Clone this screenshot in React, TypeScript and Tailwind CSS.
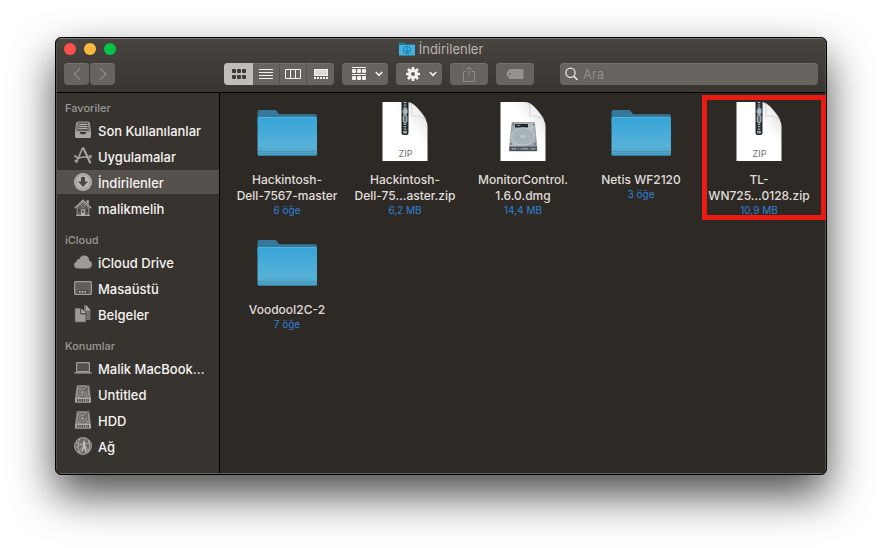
import { useId } from "react";
import type { ReactNode } from "react";

/* ---------- Sidebar icons (18 × 18) ---------- */

function Icon18({ children }: { children: ReactNode }) {
  return (
    <svg viewBox="0 0 18 18" className="h-[18px] w-[18px] shrink-0" aria-hidden="true">
      {children}
    </svg>
  );
}

const TrayIcon = () => (
  <Icon18>
    <path d="M3.600 1h10.800l1 9.500H2.600z" fill="#5f5c58" stroke="#a19e9a" strokeWidth="1" />
    <path d="M4.800 3.500h8.400M4.600 5.500h8.800M4.500 7.500h9" stroke="#b0ada9" strokeWidth="1" />
    <path d="M1 11h4.600c.4 1.700 1.600 2.300 3.400 2.300s3-.6 3.400-2.300H17v4.600c0 .9-.5 1.400-1.400 1.400H2.400C1.500 17 1 16.500 1 15.600z" fill="#aaa7a3" />
    <path d="M2.600 1.500L1.400 11M15.400 1.500L16.600 11" stroke="#a19e9a" strokeWidth="1" />
  </Icon18>
);

const AppsIcon = () => (
  <Icon18>
    <g fill="none" stroke="#a5a29e">
      <path d="M8.200 1.800L2.300 16" strokeWidth="1.600" />
      <path d="M9.600 1.800L15.600 14.500l.7 2" strokeWidth="2.200" />
      <path d="M7.500 2.200L9 .8l1.600 1.400" strokeWidth="1.400" />
      <path d="M.3 8.500l4 3M17.700 8.500L14.500 9.500" strokeWidth="1.600" />
      <path d="M3 12.200c3.500-2.400 8.500-2.400 12-1.200M.5 14.500l2-1.600M15 9.500l2.700 1.400" strokeWidth="1.500" />
    </g>
  </Icon18>
);

const DownloadsIcon = () => (
  <Icon18>
    <circle cx="9" cy="9" r="9" fill="#bab7b3" />
    <circle cx="9" cy="9" r="7.300" fill="none" stroke="#8d8a86" strokeWidth=".7" />
    <path d="M7 4h4v4.500h3L9 14 4 8.500h3z" fill="#4e4b47" />
  </Icon18>
);

const HomeIcon = () => (
  <Icon18>
    <path d="M.7 9.200L9 1.200l8.300 8" fill="none" stroke="#a9a6a2" strokeWidth="1.400" />
    <path d="M12.500 1.200h2.300v4.200l-2.300-2z" fill="#a9a6a2" />
    <path d="M3.200 8.500L9 3l5.800 5.500V16H3.200z" fill="#5d5a56" stroke="#a9a6a2" strokeWidth=".8" />
    <path d="M2 16.500h14" stroke="#a9a6a2" strokeWidth="1" />
    <circle cx="9" cy="6.800" r="1.500" fill="#45423e" stroke="#b5b2ae" strokeWidth=".6" />
    <rect x="7.200" y="10.200" width="3.600" height="6.300" fill="#b5b2ae" />
    <rect x="8" y="11.200" width="1.600" height="2.500" fill="#45423e" />
    <path d="M4.800 10v3M13.200 10v3" stroke="#3a3733" strokeWidth="1.200" />
  </Icon18>
);

const CloudIcon = () => (
  <Icon18>
    <path
      d="M4 15.500C1.700 15.500 0 13.900 0 11.800c0-1.800 1.200-3 2.700-3.400C2.800 6.700 4 5.900 5.400 6 6.200 3.700 8 2.500 10.200 2.500c3 0 5 2.200 5 5.200C16.900 8.100 18 9.600 18 11.500c0 2.300-1.800 4-4 4z"
      fill="#9f9c98"
    />
  </Icon18>
);

const DesktopIcon = () => (
  <Icon18>
    <rect x=".6" y="2.600" width="16.800" height="12.800" rx="1" fill="#625f5b" stroke="#9f9c98" strokeWidth="1.200" />
    <rect x="3.500" y="11" width="11" height="3.500" fill="#4a4743" />
    <path d="M5 12.800h1.600M7.700 12.800h1.600M10.400 12.800H12" stroke="#d0cdc9" strokeWidth="1.600" />
  </Icon18>
);

const DocsIcon = () => (
  <Icon18>
    <path d="M6.500 0H12l4.500 5v10H10V0z" fill="#76736f" />
    <path d="M12 0l4.600 5.300H12z" fill="#aeaba7" />
    <path d="M.8 3H7l5 5.600V17.200H.8z" fill="#9f9c98" stroke="#38342f" strokeWidth=".6" />
    <path d="M6.800 2.600v6.200h5.500" fill="none" stroke="#38342f" strokeWidth="1" />
    <path d="M7.500 3.600L11.700 8H7.500z" fill="#aeaba7" />
  </Icon18>
);

const LaptopIcon = () => (
  <Icon18>
    <rect x="2.600" y="3.600" width="12.800" height="9" rx=".8" fill="#55524e" stroke="#a19e9a" strokeWidth="1.200" />
    <path d="M0 13.200h18c-.2 1-.7 1.300-1.500 1.300h-15C.7 14.500.2 14.200 0 13.200z" fill="#aba8a4" />
  </Icon18>
);

const DiskIcon = () => (
  <Icon18>
    <path d="M2.800.2h12.400l1.600 12.300v5H1.200v-5z" fill="#92908c" />
    <path d="M1.200 13h15.600v4.600H1.200z" fill="#adaaa6" />
    <circle cx="9" cy="7" r="4.700" fill="#8b8884" stroke="#5e5b57" strokeWidth=".9" />
    <circle cx="8.700" cy="7.300" r="1.900" fill="#aaa7a3" stroke="#55524e" strokeWidth=".9" />
    <path d="M13.500 2.800l-3.200 4" stroke="#55524e" strokeWidth="1.200" />
    <path d="M3.600 1.700h2M12.500 1.700h2M3 11h1.500M13.500 11H15" stroke="#55524e" strokeWidth=".8" />
    <path d="M3.500 14v2.800M5.200 14v2.800M6.900 14v2.800M8.600 14v2.800M10.300 14v2.800M12.600 14v2.800M14.300 14v2.800" stroke="#3a3733" strokeWidth=".9" />
  </Icon18>
);

const NetworkIcon = () => (
  <Icon18>
    <circle cx="9" cy="9" r="8.400" fill="#6d6a66" stroke="#aba8a4" strokeWidth="1" />
    <g fill="none" stroke="#b3b0ac" strokeWidth=".9">
      <path d="M2.200 5.200c4 2.600 9.600 2.600 13.600 0M1.500 11c3-2.500 5.500-3.600 9.500-3.800M11 1.500c-1.500 3-1.500 4.500-1 7M6.200 1.500C3 6 3.500 12.500 6.800 16.500M10.300 8.500c2.500 1.500 4 4 4.500 6M8.500 9c-1 2.500-2.500 4.500-4.500 6M14 2.500c2 4 2 9-.5 12.500" />
    </g>
    <circle cx="10.200" cy="5.600" r="1.200" fill="#d0cdc9" />
    <path d="M9.200 7h2l.6 4 1.400 4.500-1.500.2-1.500-4.400-1.800 3.500-1.300-.5L9 10.500z" fill="#c5c2be" />
  </Icon18>
);

/* ---------- File icons ---------- */

function FolderIcon() {
  const id = useId();
  return (
    <svg viewBox="0 0 64 64" className="h-16 w-16" aria-hidden="true">
      <defs>
        <linearGradient id={id} x1="0" y1="0" x2="0" y2="1">
          <stop offset="0" stopColor="#36a5d8" />
          <stop offset=".75" stopColor="#56b1d7" />
          <stop offset="1" stopColor="#4b9fc3" />
        </linearGradient>
      </defs>
      <path d="M2.500 12a2 2 0 0 1 2-2H19c1.600 0 2.600.6 3.500 2l1 1.600c.3.500.8.700 1.500.7h35a2 2 0 0 1 2 2V24h-59.500z" fill="#35789a" />
      <path d="M2.500 18.500a1.500 1.500 0 0 1 1.500-1.500h56.500a1.500 1.500 0 0 1 1.500 1.500V54a2 2 0 0 1-2 2H4.500a2 2 0 0 1-2-2z" fill={`url(#${id})`} />
      <path d="M3.500 17.500H61" stroke="#50b3df" strokeWidth="1" />
      <path d="M3 51.500h58.500M3 53.500h58.500" stroke="#4393b5" strokeWidth=".7" />
      <path d="M3.500 55.500H61" stroke="#337b9b" strokeWidth="1" />
    </svg>
  );
}

function PageShape({ children }: { children: ReactNode }) {
  const id = useId();
  return (
    <svg viewBox="0 0 64 64" className="h-16 w-16" aria-hidden="true">
      <defs>
        <linearGradient id={id} x1="0" y1="1" x2="1" y2="0">
          <stop offset=".6" stopColor="#ffffff" />
          <stop offset=".8" stopColor="#ececec" />
          <stop offset="1" stopColor="#a8a8a8" />
        </linearGradient>
        <linearGradient id={`${id}-curl`} x1="0" y1="1" x2="1" y2="0">
          <stop offset="0" stopColor="#ffffff" />
          <stop offset="1" stopColor="#dedede" />
        </linearGradient>
      </defs>
      <path d="M9.500 2H34c4 0 8 3 12 8s8.500 10.500 8.500 16v35h-45z" fill={`url(#${id})`} />
      <path
        d="M38 3c1.500 3 1.500 8 .6 13 4-.8 9-.2 14.200 3.500C50 14 43 5.500 38 3z"
        fill={`url(#${id}-curl)`}
        stroke="#b5b5b5"
        strokeWidth=".5"
      />
      {children}
    </svg>
  );
}

function ZipIcon() {
  return (
    <PageShape>
      <path d="M28.500 2h7v31a2 2 0 0 1-2 2h-3a2 2 0 0 1-2-2z" fill="#23272b" />
      <path d="M32 2v31" stroke="#a9b4ba" strokeWidth="2.600" strokeDasharray="1.300 1.100" />
      <path d="M30.500 8h3.500l1 4-1.700 3h-2.400l-1.500-3z" fill="#a9bac2" stroke="#49545b" strokeWidth=".6" />
      <rect x="30.300" y="15" width="3.600" height="7.500" rx="1.600" fill="#65727a" stroke="#c7d0d5" strokeWidth=".9" />
      <rect x="30" y="31" width="4" height="2.500" rx=".8" fill="#9aa2a7" />
      <text x="32.500" y="57" textAnchor="middle" fontSize="9" fontFamily="Inter, sans-serif" fill="#6b6b6b">
        ZIP
      </text>
    </PageShape>
  );
}

function DmgIcon() {
  const id = useId();
  return (
    <PageShape>
      <defs>
        <linearGradient id={id} x1="0" y1="0" x2="1" y2="1">
          <stop offset="0" stopColor="#93a1a8" />
          <stop offset=".5" stopColor="#b6c0c5" />
          <stop offset="1" stopColor="#8a979e" />
        </linearGradient>
      </defs>
      <path d="M21 22.500h22.500l2.300 24V51H18.500v-4.500z" fill={`url(#${id})`} stroke="#7c888e" strokeWidth=".6" />
      <rect x="24" y="24" width="13" height="3.500" fill="#20262a" />
      <path d="M25.500 25.300h4" stroke="#a8b3b8" strokeWidth=".8" />
      <ellipse cx="32" cy="36.500" rx="11.500" ry="8.800" fill="#a9b4ba" stroke="#c6ced2" strokeWidth=".7" />
      <ellipse cx="32" cy="36.500" rx="3.600" ry="2.800" fill="#bac3c8" stroke="#98a4aa" strokeWidth=".7" />
      <path d="M18.500 46.500h27.300V51H18.500z" fill="#454d52" />
      <path d="M20.500 48.800h5M27 48.800h1M29.500 48.800h8M39.500 48.800h5" stroke="#87939a" strokeWidth="2" />
      <g fill="#4d575c">
        <circle cx="22" cy="24.500" r=".8" />
        <circle cx="42.500" cy="24.500" r=".8" />
        <circle cx="20.500" cy="44" r=".8" />
        <circle cx="44" cy="44" r=".8" />
      </g>
    </PageShape>
  );
}

/* ---------- Toolbar ---------- */

const Chevron = () => (
  <svg width="8" height="6" viewBox="0 0 8 6" fill="none" stroke="#f4f2f0" strokeWidth="1.500" aria-hidden="true">
    <path d="M.8 1l3.200 3.300L7.200 1" />
  </svg>
);

const toolButton =
  "flex h-[22px] items-center justify-center rounded bg-[#67635f] shadow-[inset_0_1px_0_#75716d]";

const viewButtons = [
  {
    label: "Simge",
    style: "w-[29px] bg-[#c0bcb8]",
    icon: (
      <g fill="#3d3935">
        {[2, 8].map((y) =>
          [1, 6, 11].map((x) => <rect key={`${x}-${y}`} x={x} y={y} width="4" height="4" rx="1" />),
        )}
      </g>
    ),
  },
  {
    label: "Liste",
    style: "w-[26px]",
    icon: <path d="M1 2.500h14M1 5.500h14M1 8.500h14M1 11.500h14" stroke="#f4f2f0" />,
  },
  {
    label: "Sütun",
    style: "w-[27px] border-l border-[#55514d]",
    icon: <path d="M.5 2.500h15v9H.5zM5.500 2.500v9M10.500 2.500v9" fill="none" stroke="#f4f2f0" />,
  },
  {
    label: "Galeri",
    style: "w-[28px] border-l border-[#55514d]",
    icon: (
      <>
        <rect x="1.500" y="2.500" width="13" height="6" fill="#dedad6" stroke="#f4f2f0" />
        <path d="M1 11h2M4 11h2M7 11h2M10 11h2M13 11h2" stroke="#f4f2f0" strokeWidth="2" />
      </>
    ),
  },
];

function Toolbar() {
  return (
    <header className="h-[54px] shrink-0 border-b border-black bg-linear-to-b from-[#48443f] to-[#393531] px-[7px]">
      <div className="grid h-5 grid-cols-[1fr_auto_1fr] items-center">
        <div className="flex gap-2">
          <button aria-label="Kapat" className="h-3 w-3 rounded-full bg-[#ff4f4b]" />
          <button aria-label="Küçült" className="h-3 w-3 rounded-full bg-[#ffb83f]" />
          <button aria-label="Büyüt" className="h-3 w-3 rounded-full bg-[#00c447]" />
        </div>
        <h1 className="flex items-center gap-1 text-[13px] leading-5 text-[#b9b6b2]">
          <svg width="16" height="14" viewBox="0 0 16 14" aria-hidden="true">
            <path d="M0 .5h5.500L7 2h9v3H0z" fill="#23769a" />
            <path d="M0 3h16v10.500H0z" fill="#45b2de" />
            <circle cx="8" cy="8" r="3.700" fill="none" stroke="#1b81b0" />
            <path d="M8 5.500v4.500M6 8.300L8 10.300l2-2" fill="none" stroke="#1b81b0" strokeWidth="1.200" />
          </svg>
          İndirilenler
        </h1>
      </div>

      <div className="mt-1 flex">
        <div className="flex gap-px">
          <button aria-label="Geri" className={`${toolButton} w-[25px]`}>
            <svg width="8" height="12" viewBox="0 0 8 12" fill="none" stroke="#8f8b87" strokeWidth="1.300">
              <path d="M7 .5L1.200 6 7 11.500" />
            </svg>
          </button>
          <button aria-label="İleri" className={`${toolButton} w-[25px]`}>
            <svg width="8" height="12" viewBox="0 0 8 12" fill="none" stroke="#8f8b87" strokeWidth="1.300">
              <path d="M1 .5L6.800 6 1 11.500" />
            </svg>
          </button>
        </div>

        <div className="ml-[109px] flex gap-2">
          <div className={`${toolButton} overflow-hidden`}>
            {viewButtons.map((b) => (
              <button key={b.label} aria-label={b.label} className={`flex h-full items-center justify-center ${b.style}`}>
                <svg width="16" height="14" viewBox="0 0 16 14">
                  {b.icon}
                </svg>
              </button>
            ))}
          </div>
          <button aria-label="Düzenle" className={`${toolButton} w-[46px] gap-2 pl-[3px]`}>
            <svg width="16" height="14" viewBox="0 0 16 14">
              <path d="M1 .5h14M1 7.500h14" stroke="#f4f2f0" />
              <g fill="#f4f2f0">
                {[2, 9].map((y) =>
                  [1, 6, 11].map((x) => <rect key={`${x}-${y}`} x={x} y={y} width="4" height="4" rx="1" />),
                )}
              </g>
            </svg>
            <Chevron />
          </button>
          <button aria-label="Eylem" className={`${toolButton} w-[46px] gap-2 pl-[3px]`}>
            <svg width="16" height="16" viewBox="0 0 16 16">
              <g stroke="#f4f2f0" strokeWidth="2.600">
                <path d="M8 1v14M1 8h14M3 3l10 10M13 3L3 13" />
              </g>
              <circle cx="8" cy="8" r="5" fill="#f4f2f0" />
              <circle cx="8" cy="8" r="2" fill="#67635f" />
            </svg>
            <Chevron />
          </button>
          <button aria-label="Paylaş" className={`${toolButton} w-[38px]`}>
            <svg width="12" height="16" viewBox="0 0 12 16" fill="none" stroke="#8f8b87">
              <path d="M3.500 5.500h-3v10h11v-10h-3M6 11V1M3 4l3-3 3 3" />
            </svg>
          </button>
          <button aria-label="Etiketler" className={`${toolButton} w-[38px]`}>
            <svg width="18" height="10" viewBox="0 0 18 10">
              <path d="M4.500 0H16a1.500 1.500 0 0 1 1.500 1.500v7A1.500 1.500 0 0 1 16 10H4.500C3 10 .5 6.500.5 5S3 0 4.500 0z" fill="#96928e" />
              <circle cx="4" cy="5" r="1" fill="#67635f" />
            </svg>
          </button>
        </div>

        <label className={`${toolButton} ml-[26px] min-w-0 flex-1 gap-1 pr-2 pl-[5px]`}>
          <svg width="14" height="14" viewBox="0 0 14 14" fill="none" stroke="#e9e7e5" strokeWidth="1.300" aria-hidden="true">
            <circle cx="5.500" cy="5.700" r="4.600" />
            <path d="M8.800 9.200l3.700 3.700" strokeWidth="1.600" />
          </svg>
          <input
            type="search"
            aria-label="Ara"
            placeholder="Ara"
            className="h-full min-w-0 flex-1 bg-transparent text-[13px] text-white outline-none placeholder:text-[#918d89]"
          />
        </label>
      </div>
    </header>
  );
}

/* ---------- Sidebar ---------- */

const sections = [
  {
    title: "Favoriler",
    items: [
      { label: "Son Kullanılanlar", icon: <TrayIcon /> },
      { label: "Uygulamalar", icon: <AppsIcon /> },
      { label: "İndirilenler", icon: <DownloadsIcon />, active: true },
      { label: "malikmelih", icon: <HomeIcon /> },
    ],
  },
  {
    title: "iCloud",
    items: [
      { label: "iCloud Drive", icon: <CloudIcon /> },
      { label: "Masaüstü", icon: <DesktopIcon /> },
      { label: "Belgeler", icon: <DocsIcon /> },
    ],
  },
  {
    title: "Konumlar",
    items: [
      { label: "Malik MacBook…", icon: <LaptopIcon /> },
      { label: "Untitled", icon: <DiskIcon /> },
      { label: "HDD", icon: <DiskIcon /> },
      { label: "Ağ", icon: <NetworkIcon /> },
    ],
  },
];

function Sidebar() {
  return (
    <nav className="flex w-[163px] shrink-0 flex-col gap-[10px] overflow-hidden border-r border-black bg-[#37332f] pt-[5px]">
      {sections.map((section) => (
        <section key={section.title}>
          <h2 className="pl-2 text-[11px] leading-5 font-medium text-[#9b9894]">{section.title}</h2>
          <ul className="flex flex-col gap-[2px]">
            {section.items.map((item) => (
              <li key={item.label}>
                <a
                  href="#"
                  className={`flex h-6 items-center gap-[6px] pl-[17px] text-[13px] font-medium whitespace-nowrap text-[#f6f4f2] ${
                    "active" in item ? "bg-[#55514d]" : ""
                  }`}
                >
                  {item.icon}
                  <span className="pt-[2px] leading-5">{item.label}</span>
                </a>
              </li>
            ))}
          </ul>
        </section>
      ))}
    </nav>
  );
}

/* ---------- Files ---------- */

const files = [
  { lines: ["Hackintosh-", "Dell-7567-master"], info: "6 öğe", icon: <FolderIcon /> },
  { lines: ["Hackintosh-", "Dell-75…aster.zip"], info: "6,2 MB", icon: <ZipIcon /> },
  { lines: ["MonitorControl.", "1.6.0.dmg"], info: "14,4 MB", icon: <DmgIcon /> },
  { lines: ["Netis WF2120"], info: "3 öğe", icon: <FolderIcon /> },
  { lines: ["TL-", "WN725…0128.zip"], info: "10,9 MB", icon: <ZipIcon />, marked: true },
  { lines: ["VoodooI2C-2"], info: "7 öğe", icon: <FolderIcon /> },
];

function Files() {
  return (
    <main className="grid min-w-0 flex-1 auto-rows-[130px] grid-cols-[repeat(auto-fill,118px)] bg-[#2d2a26] pt-[7px] pl-2">
      {files.map((file) => (
        <figure key={file.lines.join("")} className="relative flex flex-col items-center">
          {file.icon}
          <figcaption className="mt-2 text-center text-[12px] leading-4 font-medium whitespace-nowrap text-[#e0dedb]">
            {file.lines.map((line) => (
              <span key={line} className="block">
                {line}
              </span>
            ))}
            <span className="block text-[10px] leading-[13px] font-normal text-[#3081d4]">{file.info}</span>
          </figcaption>
          {"marked" in file && (
            <span className="absolute -top-[5px] -right-2 left-[2px] h-[125px] border-5 border-[#e91b13]" />
          )}
        </figure>
      ))}
    </main>
  );
}

export default function App() {
  return (
    <div className="flex h-screen flex-col bg-white px-[55px] pt-[37px] pb-[73px] font-[Inter,'Noto_Sans',sans-serif]">
      <div className="flex min-h-0 flex-1 flex-col overflow-hidden rounded-md border border-black bg-[#2d2a26] shadow-[0_20px_44px_rgba(0,0,0,0.7)]">
        <div className="flex min-h-0 flex-1 flex-col rounded-[5px] border border-t-[#797672] border-r-[#55524e] border-b-[#65625e] border-l-[#55524e]">
          <Toolbar />
          <div className="flex min-h-0 flex-1">
            <Sidebar />
            <Files />
          </div>
        </div>
      </div>
    </div>
  );
}
